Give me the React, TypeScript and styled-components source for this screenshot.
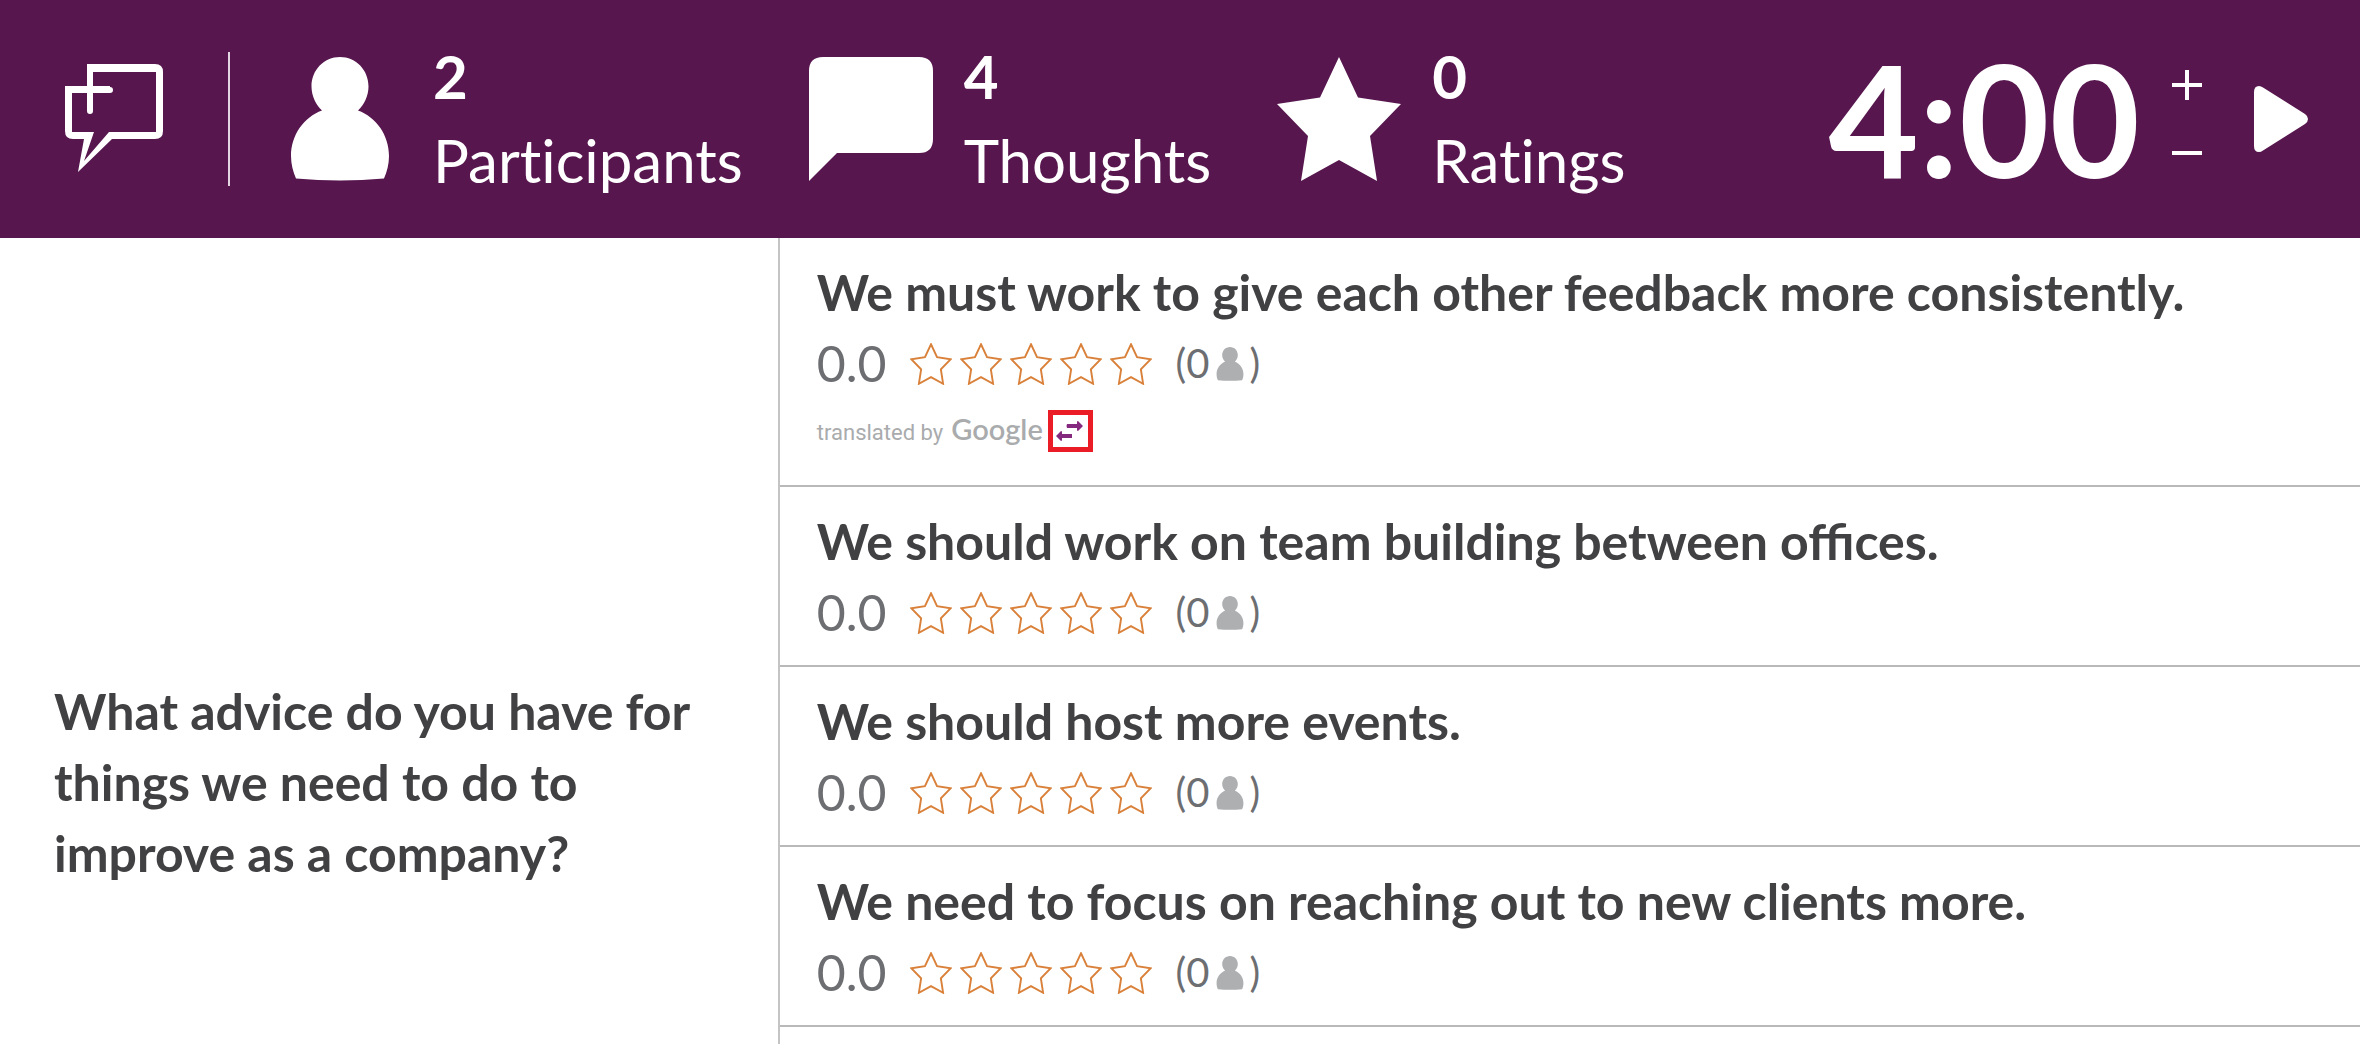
import React from "react";
import styled, { createGlobalStyle } from "styled-components";

const GlobalStyle = createGlobalStyle`
  * { box-sizing: border-box; }
  body {
    margin: 0;
    background: #fff;
    color: #414143;
    font-family: Lato, "Liberation Sans", sans-serif;
  }
  h1, h2, p, ul { margin: 0; padding: 0; }
  button { border: 0; padding: 0; background: none; color: inherit; cursor: pointer; }
  svg { display: block; flex: none; }
`;

const Page = styled.div`
  display: flex;
  flex-direction: column;
  height: 100vh;
  overflow: hidden;
`;

const TopBar = styled.header`
  display: flex;
  align-items: center;
  flex: none;
  height: 238px;
  padding: 0 50px 0 64px;
  background: #57164e;
  color: #fff;
`;

const LogoLink = styled.a`
  color: inherit;
`;

const Divider = styled.span`
  width: 2px;
  height: 134px;
  margin: 0 48px 0 64px;
  background: #e3d5e1;
`;

const Stats = styled.ul`
  display: flex;
  gap: 66px;
  list-style: none;
`;

const Stat = styled.li`
  display: flex;
  align-items: center;
  gap: 31px;
  font-size: 60px;
  line-height: 84px;
  font-variant-ligatures: none;
`;

const StatText = styled.div`
  display: flex;
  flex-direction: column;
  padding-bottom: 2px;
`;

const Timer = styled.div`
  display: flex;
  align-items: center;
  margin-left: auto;
`;

const Clock = styled.time`
  padding-bottom: 2px;
  font-size: 156px;
  line-height: 192px;
  font-weight: 700;
`;

const Steppers = styled.div`
  display: flex;
  flex-direction: column;
  gap: 38px;
  margin: 0 52px 0 32px;
`;

const Columns = styled.main`
  display: flex;
  flex: 1;
  min-height: 0;
`;

const Question = styled.section`
  flex: none;
  width: calc(33% - 1px);
  padding: 438px 54px 0;
`;

const Title = styled.h1`
  font-size: 50px;
  line-height: 71px;
  font-weight: 700;
`;

const Thoughts = styled.ul`
  flex: 1;
  min-width: 0;
  border-left: 2px solid #c4c4c5;
  list-style: none;
`;

const Thought = styled.li`
  padding: 19px 37px 17px;
  border-bottom: 2px solid #b9b9ba;
`;

const ThoughtText = styled.h2`
  font-size: 50px;
  line-height: 71px;
  font-weight: 700;
`;

const Rating = styled.div`
  display: flex;
  align-items: center;
  height: 71px;
  color: #6d6e71;
`;

const Score = styled.span`
  font-size: 50px;
  line-height: 71px;
`;

const Stars = styled.span`
  display: flex;
  gap: 8px;
  margin: 0 24px 0 23px;
`;

const Raters = styled.span`
  display: flex;
  align-items: center;
  gap: 3px;
  font-size: 40px;
  line-height: 71px;
`;

const Translation = styled.div`
  display: flex;
  align-items: center;
  gap: 5px;
  height: 64px;
  margin-bottom: 5px;
`;

const Credit = styled.p`
  display: flex;
  align-items: baseline;
  gap: 8px;
  padding-bottom: 6px;
  color: #a9abad;
  font-family: Roboto, sans-serif;
  font-size: 22px;
`;

const Google = styled.span`
  font-family: Lato, sans-serif;
  font-size: 29px;
  font-weight: 600;
`;

const SwapButton = styled.button`
  display: grid;
  place-items: center;
  width: 45px;
  height: 42px;
  && { border: 5px solid #ea1c25; }
`;

const STAR = "M62 0 81 40.5 124 47 93 79 100 124 62 103 24 124 31 79 0 47 43 40.5Z";

const LogoIcon = () => (
  <svg width="100" height="110" viewBox="0 0 100 110" fill="none" stroke="#fff" strokeWidth="6" strokeLinecap="round">
    <path d="M26 47V4M46 26H5" />
    <path
      fill="#fff"
      stroke="none"
      fillRule="evenodd"
      d="M23 0H91Q99 0 99 8V67Q99 75 91 75H48L14 108 20 75H9Q1 75 1 67V22H23ZM29 8V22H46V28H29V47H23V28H8V68H30L20 97 45 68H92V8Z"
    />
  </svg>
);

const PersonIcon = ({ size, color }: { size: number; color: string }) => (
  <svg width={size} height={size} viewBox="0 0 124 124" fill={color}>
    <path d="M62 0C78 0 90.500 13 90.500 29.500C90.500 39 86 48 80 53.500C98 60 111 78 111 99C111 107 109 115 106 121.500Q62 125.500 18 121.500C15 115 13 107 13 99C13 78 26 60 44 53.500C38 48 33.500 39 33.500 29.500C33.500 13 46 0 62 0Z" />
  </svg>
);

const BubbleIcon = () => (
  <svg width="124" height="124" viewBox="0 0 124 124" fill="#fff">
    <path d="M14 0H110Q124 0 124 14V82Q124 96 110 96H28L0 124V14Q0 0 14 0Z" />
  </svg>
);

const StarIcon = () => (
  <svg width="124" height="124" viewBox="0 0 124 124" fill="#fff">
    <path d={STAR} />
  </svg>
);

const StarOutline = () => (
  <svg width="42" height="42" viewBox="-4 -4 132 132" fill="none" stroke="#d9813a" strokeWidth="6">
    <path d={STAR} />
  </svg>
);

const PlusIcon = () => (
  <svg width="30" height="30" viewBox="0 0 30 30" stroke="#fff" strokeWidth="4">
    <path d="M0 15H30M15 0V30" />
  </svg>
);

const MinusIcon = () => (
  <svg width="30" height="30" viewBox="0 0 30 30" stroke="#fff" strokeWidth="4">
    <path d="M0 15H30" />
  </svg>
);

const PlayIcon = () => (
  <svg width="56" height="66" viewBox="0 0 56 66" fill="#fff">
    <path d="M0 6Q0 0 5 0Q7 0 9 1.500L51 28Q54 30 54 33Q54 36 51 38L9 64.500Q7 66 5 66Q0 66 0 60Z" />
  </svg>
);

const SwapIcon = () => (
  <svg width="29" height="20" viewBox="0 0 29 20" fill="#85297f">
    <path d="M11 3H21V1Q21 0 22 0L27 5 22 10Q21 10 21 9V7H11Q10 5 11 3ZM16 13V17H6V19Q6 20 5 20L0 15 5 10Q6 10 6 11V13Z" />
  </svg>
);

const stats = [
  { value: 2, label: "Participants", icon: <PersonIcon size={124} color="#fff" /> },
  { value: 4, label: "Thoughts", icon: <BubbleIcon /> },
  { value: 0, label: "Ratings", icon: <StarIcon /> },
];

const thoughts = [
  { text: "We must work to give each other feedback more consistently.", translated: true },
  { text: "We should work on team building between offices." },
  { text: "We should host more events." },
  { text: "We need to focus on reaching out to new clients more." },
];

export default function App() {
  return (
    <Page>
      <GlobalStyle />
      <TopBar>
        <LogoLink href="#" aria-label="Home">
          <LogoIcon />
        </LogoLink>
        <Divider />
        <Stats>
          {stats.map((s) => (
            <Stat key={s.label}>
              {s.icon}
              <StatText>
                <strong>{s.value}</strong>
                <span>{s.label}</span>
              </StatText>
            </Stat>
          ))}
        </Stats>
        <Timer>
          <Clock>4:00</Clock>
          <Steppers>
            <button aria-label="Add time"><PlusIcon /></button>
            <button aria-label="Remove time"><MinusIcon /></button>
          </Steppers>
          <button aria-label="Start timer"><PlayIcon /></button>
        </Timer>
      </TopBar>
      <Columns>
        <Question>
          <Title>What advice do you have for things we need to do to improve as a company?</Title>
        </Question>
        <Thoughts>
          {thoughts.map((t) => (
            <Thought key={t.text}>
              <ThoughtText>{t.text}</ThoughtText>
              <Rating>
                <Score>0.0</Score>
                <Stars role="img" aria-label="0 out of 5 stars">
                  {[1, 2, 3, 4, 5].map((n) => <StarOutline key={n} />)}
                </Stars>
                <Raters>
                  <span>(0</span>
                  <PersonIcon size={34} color="#adafb1" />
                  <span>)</span>
                </Raters>
              </Rating>
              {t.translated && (
                <Translation>
                  <Credit>
                    translated by
                    <Google>Google</Google>
                  </Credit>
                  <SwapButton aria-label="Show original"><SwapIcon /></SwapButton>
                </Translation>
              )}
            </Thought>
          ))}
        </Thoughts>
      </Columns>
    </Page>
  );
}
